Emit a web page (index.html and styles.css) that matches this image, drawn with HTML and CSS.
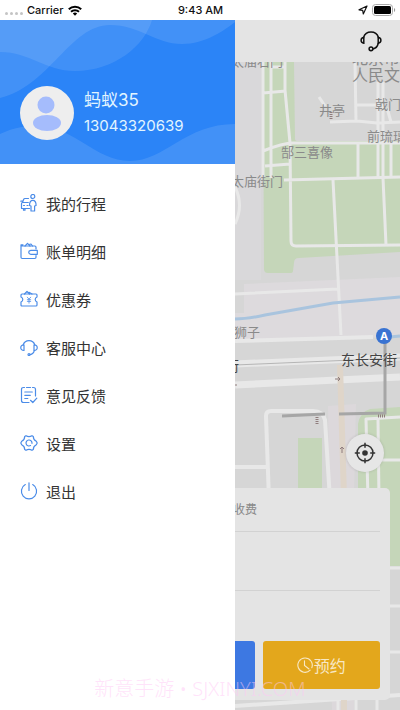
FILE: index.html
```html
<!DOCTYPE html>
<html lang="zh-CN">
<head>
    <meta charset="UTF-8">
    <meta name="viewport" content="width=device-width, initial-scale=1.0">
    <title>个人中心</title>
    <link rel="stylesheet" href="styles.css">
</head>
<body>
    <div class="phone">
        <header class="status-bar">
            <div class="status-left">
                <span class="signal"><i></i><i></i><i></i><i></i></span>
                <span>Carrier</span>
                <svg class="wifi" viewBox="0 0 14 11" fill="none" stroke="#000" stroke-width="2">
                    <path d="M0.8 4.2a8.8 8.8 0 0 1 12.4 0"/>
                    <path d="M3 6.8a5.7 5.7 0 0 1 8 0"/>
                    <path d="M7 10.8 4.8 8.6a3.1 3.1 0 0 1 4.4 0z" fill="#000" stroke="none"/>
                </svg>
            </div>
            <span class="time">9:43 AM</span>
            <div class="status-right">
                <svg class="arrow" viewBox="0 0 10 10" fill="none" stroke="#111" stroke-width="1.2" stroke-linejoin="round">
                    <path d="M9 1 1 4.8l3.7.6.6 3.6z"/>
                </svg>
                <svg class="battery" viewBox="0 0 24 12">
                    <rect x="0.5" y="0.5" width="20" height="11" rx="3" fill="#fff" stroke="#aaa"/>
                    <rect x="2" y="2" width="17" height="8" rx="1.5" fill="#000"/>
                    <path d="M22 4c1.6.5 1.6 3.5 0 4z" fill="#999"/>
                </svg>
            </div>
        </header>

        <div class="screen">
            <main class="home">
                <div class="top-bar">
                    <button class="icon-button" aria-label="客服">
                        <svg viewBox="0 0 22 22" fill="none" stroke="#111" stroke-width="1.5" stroke-linecap="round">
                            <path d="M3.5 7.5a7.9 7.9 0 0 1 15 0"/>
                            <path d="M3.8 7.5C.2 7.7.2 13 3.8 13.2zM18.2 7.5c3.6.2 3.6 5.5 0 5.7z"/>
                            <path d="M18.2 13.5c-.8 3.4-2.6 5-5.4 5.5"/>
                            <circle cx="11" cy="18.8" r="1.9"/>
                        </svg>
                    </button>
                </div>

                <div class="map">
                    <svg class="map-canvas" viewBox="0 62 400 648" preserveAspectRatio="xMaxYMin slice">
                        <rect y="62" width="400" height="648" fill="#d6d6d6"/>
                        <path d="M235 62h26v218h-26z" fill="#d9d8da"/>
                        <!-- park areas -->
                        <path d="M263 62h31l1 77q0 2 3 2h102v111l-101 6q-5 0-5 5l-1 8q0 2-3 2h-22q-4 0-4-4z" fill="#c5d6b9"/>
                        <path d="M298 438h24v60h-24zM370 409l30-2v159h-42V424q2-12 12-15z" fill="#c5d6b9"/>
                        <path d="M244 284l156-7v60l-165 4v-28h9z" fill="#dddadd"/>
                        <path d="M328 406l28-2-2 86v220h-22z" fill="#dcd8db"/>
                        <!-- streets -->
                        <g fill="none" stroke="#e8e8e8" stroke-width="3" stroke-linejoin="round">
                            <path d="M263 62v116M271 62v116M263 93l23-2M285 62v28l5 53 1 98q0 5 5 5l104-1M263 151q20-8 30-8h107M265 166l25-2M284 180l116-3"/>
                            <path d="M271 67h14M358 142v36M378 82v95M383 82v95M391 142v35M383 178l3 67M355 62l1 59M319 97l6 9M330 122l27-1 20 2 23-1M357 105h20M387 108l4 14"/>
                            <path d="M333 180l8 155M235 294l103-5M235 187q9 18 0 37"/>
                            <path d="M269 500l-3-84q0-5 5-5h42q10 0 12 9l5 80M235 467h32" stroke-width="4"/>
                            <path d="M368 500l-2-81 34-2M379 500l-1-81M378 460h22M390 568h10M390 606h10M390 652h10M338 700v10M356 700v10M377 700v10"/>
                            <path d="M235 341l138-4" stroke-width="4"/>
                            <path d="M235 364l165-7" stroke-width="7"/>
                            <path d="M235 385l165-8" stroke-width="7"/>
                            <path d="M235 706l165-11" stroke-width="4"/>
                        </g>
                        <path d="M235 365l165-7" stroke="#b5b5b5"/>
                        <path d="M340 365l4 132v213" fill="none" stroke="#dfd5c9" stroke-width="6"/>
                        <path d="M235 319q12 0 30-4l68-12 67-6M390 337l10-1" fill="none" stroke="#a9c4de" stroke-width="3"/>
                        <path d="M385 342v71l-46 1M325 414l-43 2" fill="none" stroke="#a6a6a6" stroke-width="3"/>
                        <g stroke="#8f7d7d" fill="none">
                            <path d="M335 379h5m-2-2 2 2-2 2M342 453v-6m-2 2 2-2 2 2M233 385h4"/>
                            <path d="M317 417v7M331 112v7M378 416h8" stroke-width="3" stroke-dasharray="1 1"/>
                        </g>
                        <g class="map-labels">
                            <text x="231" y="66">太庙右门</text>
                            <text x="352" y="64" class="large">北京市</text>
                            <text x="352" y="81" class="large">人民文化宫</text>
                            <text x="319" y="115">井亭</text>
                            <text x="375" y="109">戟门</text>
                            <text x="367" y="141">前琉璃门</text>
                            <text x="281" y="157">郜三喜像</text>
                            <text x="231" y="186">太庙街门</text>
                            <text x="234" y="337">狮子</text>
                            <text x="341" y="365" class="road">东长安街</text>
                            <text x="225" y="371" class="road">街</text>
                        </g>
                        <circle cx="384" cy="336" r="8" fill="#3973d2"/>
                        <text x="384" y="340" class="metro">A</text>
                    </svg>

                    <button class="locate" aria-label="定位">
                        <svg viewBox="0 0 22 22" fill="none" stroke="#333" stroke-width="1.5">
                            <circle cx="11" cy="11" r="8"/>
                            <circle cx="11" cy="11" r="2.8" fill="#333" stroke="none"/>
                            <path d="M11 .8v5M11 16.2v5M.8 11h5M16.2 11h5"/>
                        </svg>
                    </button>

                    <section class="order-card">
                        <p class="order-row order-note">收费</p>
                        <div class="order-row order-place"></div>
                        <div class="order-space"></div>
                        <div class="order-actions">
                            <button class="action action-now" aria-label="立即用车"></button>
                            <button class="action action-book">
                                <svg viewBox="0 0 16 16" fill="none" stroke="currentColor" stroke-width="1.1" stroke-linecap="round">
                                    <path d="M13.2 13.2a7.2 7.2 0 1 1 1.6-2.5"/>
                                    <path d="M7.5 3.8V8.5l4.5 3.5"/>
                                </svg>
                                预约
                            </button>
                        </div>
                    </section>
                </div>
            </main>

            <aside class="drawer">
                <div class="profile">
                    <svg class="waves" viewBox="0 0 235 144" preserveAspectRatio="none" fill="#fff">
                        <path d="M0 32C30 32 45 51 75 51c40 0 70-26 77-51H0z" opacity=".1"/>
                        <path d="M0 78C50 66 70 5 110 5c30 0 45 19 72 19 23 0 43-14 53-22V0H0z" opacity=".11"/>
                        <path d="M0 114c15-7 25-8 35-8 40 0 60 35 95 35s55-37 105-37v40H0z" opacity=".11"/>
                    </svg>
                    <svg class="avatar" viewBox="0 0 54 54">
                        <circle cx="27" cy="27" r="27" fill="#eee"/>
                        <circle cx="26" cy="19" r="8.5" fill="#a5bcfc"/>
                        <ellipse cx="27" cy="37" rx="14" ry="8" fill="#a5bcfc"/>
                    </svg>
                    <div class="profile-text">
                        <div class="name">蚂蚁35</div>
                        <div class="phone-number">13043320639</div>
                    </div>
                </div>

                <nav class="menu">
                    <a href="#trips">
                        <svg viewBox="0 0 18 18">
                            <circle cx="12.8" cy="2.5" r="2"/>
                            <path d="M8.5 4.5H5Q4 4.5 3.6 5.5L2.5 8.5M.8 7.2h1.5M8.3 8.5H2.5q-1 .2-1 1.2v4.8h8M3.5 14.7v1.5h1.5v-1.5M3.5 11.5h1M7 11.5h1"/>
                            <path d="M12.8 6.3c-2.7 0-3.3 2-3.3 5.2l1.5.5v5h3.6v-5l1.5-.5c0-3.2-.6-5.2-3.3-5.2z"/>
                        </svg>
                        我的行程
                    </a>
                    <a href="#bills">
                        <svg viewBox="0 0 18 18">
                            <path d="M16 7V5.2q0-1.2-1.2-1.2H1v11.3q0 1.2 1.2 1.2h12.6q1.2 0 1.2-1.2V13.5M1 4V2.8h2"/>
                            <path d="M5 4l2.5-2.7L10 4M9 2.5l2-.5L12.5 4"/>
                            <path d="M17.3 8.3h-6.5q-2.1.2-2.1 2t2.1 2h6.5z"/>
                        </svg>
                        账单明细
                    </a>
                    <a href="#coupons">
                        <svg viewBox="0 0 18 18">
                            <path d="M2 4h14q1 0 1 1v2q-1.8.8-1.8 2.5T17 12v3q0 1-1 1H2q-1 0-1-1v-3q1.8-.8 1.8-2.5T1 7V5q0-1 1-1z"/>
                            <path d="M4.5 4l2.5-2.5L9.5 4M9 2.3 12 4"/>
                            <path d="M7.3 7.2 9 9.2l1.7-2M9 9.2v4M7.3 9.7h3.4M7.3 11.4h3.4" stroke-width=".8"/>
                        </svg>
                        优惠券
                    </a>
                    <a href="#service">
                        <svg viewBox="0 0 18 18">
                            <path d="M3.2 6.8a6.1 6.1 0 0 1 11.6 0M4 6.8c-4.3-.2-4.3 5.9 0 5.7zM14 6.8c4.3-.2 4.3 5.9 0 5.7z"/>
                            <path d="M14.3 12.7c-.6 2.7-2 3.6-4.2 3.9"/>
                            <circle cx="9" cy="16.5" r="1"/>
                        </svg>
                        客服中心
                    </a>
                    <a href="#feedback">
                        <svg viewBox="0 0 18 18">
                            <path d="M4.5 1.5H3.5q-2 0-2 2V14.5q0 2 2 2H9M6.5 1.5h4M12.5 1.5h1q2 0 2 2V10"/>
                            <path d="M4.8 6h7.5M4.8 9.3h5.5M4.8 12.5h3M10.5 14.3l2.3 2.2 4-4.3"/>
                        </svg>
                        意见反馈
                    </a>
                    <a href="#settings">
                        <svg viewBox="0 0 18 18">
                            <path d="M6 1.7q3 1.8 6 0l1.3.8q0 3.4 3 4.8l.9 1.7-.9 1.7q-3 1.4-3 4.8l-1.3.8q-3-1.8-6 0l-1.3-.8q0-3.4-3-4.8L.8 9l.9-1.7q3-1.4 3-4.8z"/>
                            <path d="M10.5 11.6a3 3 0 1 1 1.5-2.3"/>
                        </svg>
                        设置
                    </a>
                    <a href="#logout">
                        <svg viewBox="0 0 18 18">
                            <path d="M5.3 2.6a7.6 7.6 0 1 0 7.4 0M9 .8v7.7"/>
                        </svg>
                        退出
                    </a>
                </nav>
            </aside>
        </div>

        <div class="watermark">新意手游 • SJXINYI.COM</div>
    </div>
</body>
</html>
```

FILE: styles.css
```css
* {
    box-sizing: border-box;
}
body {
    margin: 0;
    font-family: Inter, "Noto Sans CJK SC", sans-serif;
    color: #333;
}
button {
    border: none;
    padding: 0;
    font-family: inherit;
    cursor: pointer;
}
.phone {
    position: relative;
    display: flex;
    flex-direction: column;
    min-height: 100vh;
    overflow: hidden;
}

/* Status bar */
.status-bar {
    display: grid;
    grid-template-columns: 1fr auto 1fr;
    align-items: center;
    height: 20px;
    padding: 0 4px 0 5px;
    background: #fff;
    color: #111;
    font-size: 11px;
    font-weight: 500;
}
.status-left,
.status-right {
    display: flex;
    align-items: center;
    gap: 4px;
}
.status-right {
    justify-content: flex-end;
}
.signal {
    display: flex;
    gap: 2px;
    padding-top: 6px;
}
.signal i {
    width: 3px;
    height: 3px;
    border-radius: 50%;
    background: #c4c4c4;
}
.wifi {
    width: 14px;
    height: 11px;
}
.arrow {
    width: 10px;
    height: 10px;
}
.battery {
    width: 24px;
    height: 12px;
}

/* Home screen */
.screen {
    position: relative;
    display: flex;
    flex: 1;
}
.home {
    display: flex;
    flex-direction: column;
    flex: 1;
}
.top-bar {
    display: flex;
    align-items: center;
    justify-content: flex-end;
    height: 42px;
    padding: 0 18px;
    background: #e4e4e4;
}
.icon-button {
    width: 22px;
    height: 22px;
    background: none;
}
.icon-button svg,
.locate svg {
    display: block;
    width: 22px;
    height: 22px;
}
.map {
    position: relative;
    display: flex;
    flex-direction: column;
    justify-content: flex-end;
    flex: 1;
    gap: 16px;
    padding: 10px;
    overflow: hidden;
}
.map-canvas {
    position: absolute;
    top: 0;
    left: 0;
    width: 100%;
    height: 100%;
}
.map-labels {
    font-size: 13px;
    fill: #8a8a8a;
}
.map-labels .large {
    font-size: 16px;
}
.map-labels .road {
    font-size: 14px;
    fill: #444;
}
.metro {
    font-size: 11px;
    font-weight: 700;
    text-anchor: middle;
    fill: #fff;
}
.locate {
    position: relative;
    display: flex;
    align-items: center;
    justify-content: center;
    align-self: flex-end;
    width: 38px;
    height: 38px;
    margin-right: 6px;
    border-radius: 50%;
    background: #e6e6e6;
    box-shadow: 0 0 3px rgba(0, 0, 0, 0.15);
}

/* Order card */
.order-card {
    position: relative;
    padding: 0 10px 11px;
    border-radius: 5px;
    background: #e4e4e4;
}
.order-row {
    margin: 0;
    border-bottom: 1px solid #d2d2d2;
}
.order-note {
    height: 44px;
    padding-left: 213px;
    color: #888;
    font-size: 12px;
    line-height: 44px;
}
.order-place {
    height: 59px;
}
.order-space {
    height: 50px;
}
.order-actions {
    display: flex;
    gap: 8px;
}
.action {
    display: flex;
    align-items: center;
    justify-content: center;
    flex: 1;
    height: 48px;
    border-radius: 3px;
    color: #f8e8c4;
    font-size: 16px;
}
.action-now {
    flex: 2;
    background: #3d78e2;
}
.action-book {
    background: #e3a71c;
}
.action svg {
    width: 16px;
    height: 16px;
    margin-right: 1px;
}

/* Drawer */
.drawer {
    position: absolute;
    top: 0;
    bottom: 0;
    left: 0;
    width: 235px;
    background: #fff;
}
.profile {
    position: relative;
    display: flex;
    align-items: center;
    gap: 10px;
    padding: 66px 20px 24px;
    background: #2b84f7;
    color: #e2f5ff;
}
.waves {
    position: absolute;
    top: 0;
    left: 0;
    width: 100%;
    height: 100%;
}
.avatar {
    position: relative;
    width: 54px;
    height: 54px;
}
.profile-text {
    position: relative;
    line-height: 26px;
}
.name {
    font-size: 17px;
}
.phone-number {
    font-size: 15px;
}
.menu {
    padding: 15px 20px;
}
.menu a {
    display: flex;
    align-items: center;
    gap: 8px;
    height: 48px;
    color: #333;
    font-size: 15px;
    text-decoration: none;
}
.menu svg {
    width: 18px;
    height: 18px;
    fill: none;
    stroke: #4b8ce8;
    stroke-width: 1.2;
    stroke-linecap: round;
    stroke-linejoin: round;
}

.watermark {
    position: absolute;
    bottom: 7px;
    left: 0;
    width: 100%;
    color: rgba(255, 200, 245, 0.5);
    font-family: "Noto Sans", "Noto Sans CJK SC", sans-serif;
    font-size: 20px;
    font-weight: 300;
    line-height: 28px;
    text-align: center;
    pointer-events: none;
}
```
